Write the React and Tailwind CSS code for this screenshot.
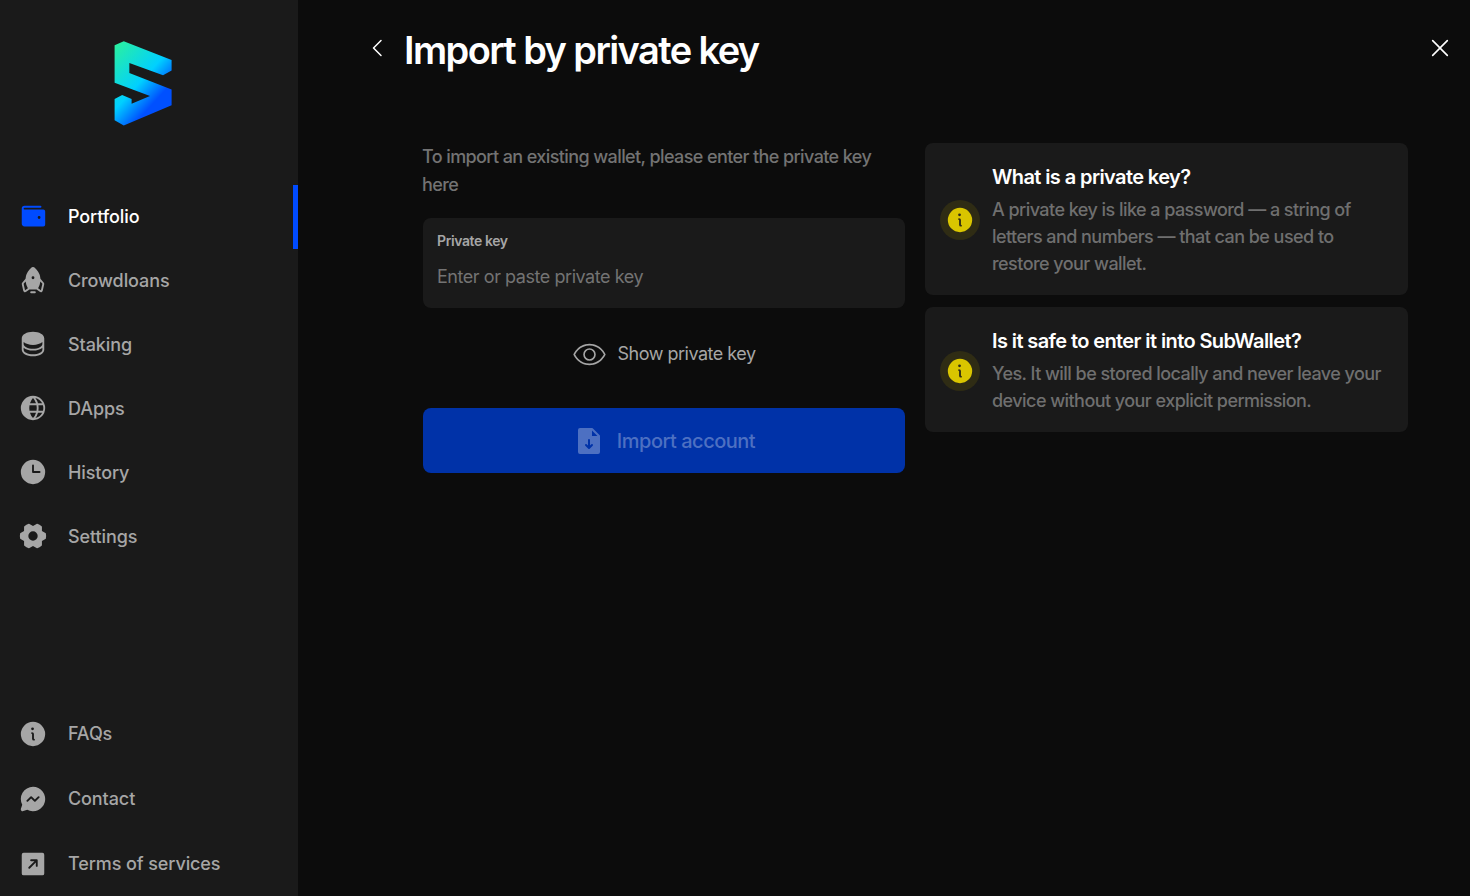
import React from 'react';
import {
  PiWalletFill,
  PiRocketFill,
  PiDatabaseFill,
  PiGlobeFill,
  PiClockFill,
  PiGearSixFill,
  PiInfoFill,
  PiMessengerLogoFill,
  PiArrowSquareUpRightFill,
  PiFileArrowDownFill,
  PiEyeLight,
  PiCaretLeft,
  PiX,
} from 'react-icons/pi';

const topNav = [
  { label: 'Portfolio', Icon: PiWalletFill, active: true },
  { label: 'Crowdloans', Icon: PiRocketFill },
  { label: 'Staking', Icon: PiDatabaseFill },
  { label: 'DApps', Icon: PiGlobeFill },
  { label: 'History', Icon: PiClockFill },
  { label: 'Settings', Icon: PiGearSixFill },
];

const bottomNav = [
  { label: 'FAQs', Icon: PiInfoFill },
  { label: 'Contact', Icon: PiMessengerLogoFill },
  { label: 'Terms of services', Icon: PiArrowSquareUpRightFill },
];

const Logo = () => (
  <svg width="298" height="188" viewBox="0 0 298 188">
    <defs>
      <linearGradient id="logoGrad" x1="110" y1="50" x2="170" y2="105" gradientUnits="userSpaceOnUse">
        <stop offset="0" stopColor="#2af0a0" />
        <stop offset="0.55" stopColor="#00d0ff" />
        <stop offset="0.85" stopColor="#0050ff" />
      </linearGradient>
    </defs>
    <path
      d="M114 46 L123.3 42 L172 61 L172 71.7 L163.3 76.7 L129 64 L129 74.3 L172 91 L172 107 L123.3 127.7 L114 122.3 L114 100.7 L121.7 96.7 L131.3 100.7 L131.3 105.7 L150 97.7 L114 84.3 Z"
      fill="url(#logoGrad)"
    />
  </svg>
);

const NavRow = ({ label, Icon, active }) => (
  <div
    className={`flex h-[65px] items-center gap-[20px] pl-[18px] text-[18px] font-medium tracking-[-0.1px] ${
      active ? 'border-r-[5px] border-[#004bff] text-white' : 'text-[#a6a6a6]'
    }`}
  >
    <Icon size={30} className={active ? 'text-[#004bff]' : 'text-[#a6a6a6]'} />
    <span>{label}</span>
  </div>
);

const InfoCard = ({ title, children }) => (
  <div className="flex items-center gap-[12px] rounded-lg bg-[#1a1a1a] pb-[18px] pl-[15px] pr-[10px] pt-[20px]">
    <div className="flex h-[40px] w-[40px] shrink-0 items-center justify-center rounded-full bg-[#2f2c14]">
      <PiInfoFill size={30} className="text-[#d9c500]" />
    </div>
    <div>
      <p className="text-[20px] font-semibold leading-[28px] tracking-[-0.6px] text-white">{title}</p>
      <p className="mt-[5px] text-[18px] font-medium leading-[27px] tracking-[-0.55px] text-[#6f6f6f]">{children}</p>
    </div>
  </div>
);

export default function App() {
  return (
    <div className="flex h-[896px] overflow-hidden bg-[#0c0c0c] font-['Inter',sans-serif]">
      <aside className="flex w-[298px] shrink-0 flex-col bg-[#1a1a1a]">
        <Logo />
        {topNav.map((item) => (
          <NavRow key={item.label} {...item} />
        ))}
        <div className="mt-[133px] shrink-0">
          {bottomNav.map((item) => (
            <NavRow key={item.label} {...item} />
          ))}
        </div>
      </aside>

      <main className="flex-1">
        <header className="flex h-[100px] items-start pl-[68px] pr-[17px] pt-[27px]">
          <PiCaretLeft size={24} className="mt-[9px] text-white" />
          <h1 className="ml-[14px] text-[38px] font-semibold leading-[46px] tracking-[-1.6px] text-white">
            Import by private key
          </h1>
          <PiX size={26} className="ml-auto mt-[8px] text-white" />
        </header>

        <div className="ml-[124px] mt-[43px] flex gap-[20px]">
          <section className="w-[483px]">
            <p className="text-[18px] font-medium leading-[28px] tracking-[-0.6px] text-[#737373]">
              To import an existing wallet, please enter the private key
              <br />
              here
            </p>
            <div className="ml-[1px] mt-[19px] h-[90px] w-[482px] rounded-lg bg-[#1a1a1a] px-[14px] pt-[14px]">
              <p className="text-[14px] font-semibold leading-[18px] tracking-[-0.4px] text-[#a6a6a6]">Private key</p>
              <p className="mt-[13px] text-[18px] leading-[28px] tracking-[-0.45px] text-[#737373]">
                Enter or paste private key
              </p>
            </div>
            <div className="ml-[1px] mt-[28px] flex w-[482px] items-center justify-center gap-[10px] text-[18px] leading-[36px] tracking-[-0.5px] text-[#a6a6a6]">
              <PiEyeLight size={35} />
              <span>Show private key</span>
            </div>
            <button className="ml-[1px] mt-[36px] flex h-[65px] w-[482px] items-center justify-center gap-[12px] rounded-lg bg-[#0032a8] text-[20px] font-medium tracking-[-0.5px] text-[#4d70c2]">
              <PiFileArrowDownFill size={32} />
              Import account
            </button>
          </section>

          <section className="flex w-[483px] flex-col gap-[12px]">
            <InfoCard title="What is a private key?">
              A private key is like a password — a string of
              <br />
              letters and numbers — that can be used to
              <br />
              restore your wallet.
            </InfoCard>
            <InfoCard title="Is it safe to enter it into SubWallet?">
              Yes. It will be stored locally and never leave your
              <br />
              device without your explicit permission.
            </InfoCard>
          </section>
        </div>
      </main>
    </div>
  );
}
